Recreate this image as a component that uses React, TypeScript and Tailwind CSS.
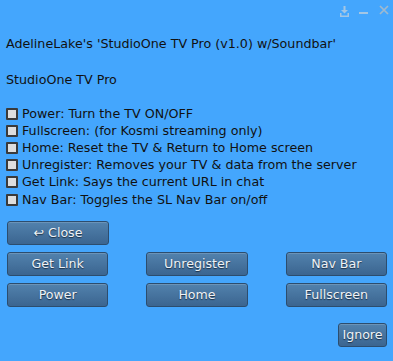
import React from "react";

const ITEMS = [
  "Power: Turn the TV ON/OFF",
  "Fullscreen: (for Kosmi streaming only)",
  "Home: Reset the TV & Return to Home screen",
  "Unregister: Removes your TV & data from the server",
  "Get Link: Says the current URL in chat",
  "Nav Bar: Toggles the SL Nav Bar on/off",
];

function Btn({ label, className = "" }: { label: string; className?: string }) {
  return (
    <button
      className={`h-[24px] rounded-[3px] border border-[#2c4d6e] bg-gradient-to-b from-[#5282ad] to-[#3b6590] text-[12.6px] text-[#eef2f6] [text-shadow:0_1px_1px_#1c2f44] shadow-[inset_0_1px_0_rgba(255,255,255,0.15)] ${className}`}
    >
      {label}
    </button>
  );
}

export default function App() {
  return (
    <div
      className="relative h-[361px] w-[393px] bg-[#44a6fd] text-[#111]"
      style={{ fontFamily: '"DejaVu Sans", sans-serif' }}
    >
      {/* title bar icons */}
      <div className="absolute left-[340px] top-[5px] flex items-start text-[#a3c6e4]">
        <svg width="9" height="12" viewBox="0 0 9 12" className="mt-[1px]">
          <rect x="3.5" y="0" width="2" height="4" fill="currentColor" />
          <path d="M1 4h7L4.5 7.5z" fill="currentColor" />
          <path d="M0 7v4h9V7H7.5v2.5h-6V7z" fill="currentColor" />
        </svg>
        <svg width="9" height="12" viewBox="0 0 9 12" className="ml-[10px]">
          <rect x="0" y="7" width="9" height="2" fill="currentColor" />
        </svg>
        <svg width="10" height="10" viewBox="0 0 10 10" className="ml-[11px] text-[#9fb9cf]">
          <path d="M1 1l8 8M9 1l-8 8" stroke="currentColor" strokeWidth="1.7" />
        </svg>
      </div>

      <div className="flex flex-col px-[6px] pt-[37px] text-[12.7px]">
        <p className="leading-[14px]">AdelineLake's 'StudioOne TV Pro (v1.0) w/Soundbar'</p>
        <p className="mt-[22px] leading-[14px]">StudioOne TV Pro</p>

        <div className="mt-[18px] flex flex-col">
          {ITEMS.map((t) => (
            <div key={t} className="flex h-[17.2px] items-center gap-[4px]">
              <span className="box-border h-[12px] w-[12px] shrink-0 rounded-[1px] border-2 border-[#3a3a3a] bg-[#dedede]" />
              <span className="whitespace-nowrap leading-[14px]">{t}</span>
            </div>
          ))}
        </div>

        <div className="mt-[13px] flex flex-col gap-[7px] pl-[1px]">
          <div className="flex">
            <Btn label="↩ Close" className="w-[102px]" />
          </div>
          <div className="flex gap-[38px]">
            <Btn label="Get Link" className="w-[102px]" />
            <Btn label="Unregister" className="w-[102px]" />
            <Btn label="Nav Bar" className="w-[102px]" />
          </div>
          <div className="flex gap-[38px]">
            <Btn label="Power" className="w-[102px]" />
            <Btn label="Home" className="w-[102px]" />
            <Btn label="Fullscreen" className="w-[102px]" />
          </div>
          <div className="mt-[9px] flex">
            <Btn label="Ignore" className="ml-[331px] w-[52px]" />
          </div>
        </div>
      </div>
    </div>
  );
}
